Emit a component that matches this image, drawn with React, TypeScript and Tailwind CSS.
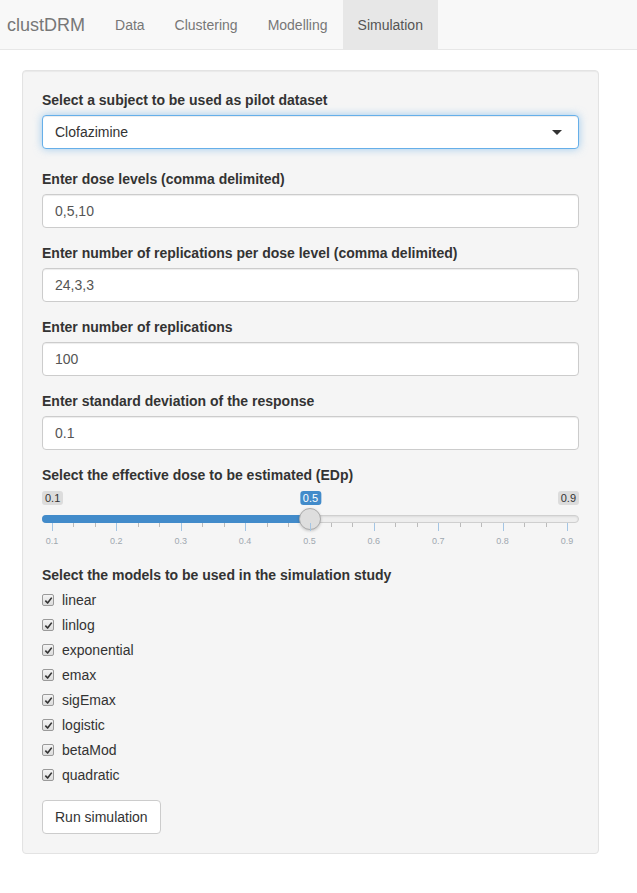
import React from 'react'

const tabs = ['Data', 'Clustering', 'Modelling', 'Simulation']
const models = ['linear', 'linlog', 'exponential', 'emax', 'sigEmax', 'logistic', 'betaMod', 'quadratic']
const textInputs = [
    {label: 'Enter dose levels (comma delimited)', value: '0,5,10'},
    {label: 'Enter number of replications per dose level (comma delimited)', value: '24,3,3'},
    {label: 'Enter number of replications', value: '100'},
    {label: 'Enter standard deviation of the response', value: '0.1'},
]

const Slider = ({min, max, value}: { min: number, max: number, value: number }) => {
    const pct = (value - min) / (max - min)
    const steps = 8
    const ticks: { p: number, major: boolean, text?: string }[] = []
    for (let i = 0; i <= steps; i++) {
        ticks.push({p: i / steps, major: true, text: (min + (i * (max - min)) / steps).toFixed(1)})
        if (i < steps) {
            ticks.push({p: (i + 1 / 3) / steps, major: false})
            ticks.push({p: (i + 2 / 3) / steps, major: false})
        }
    }
    return (
        <div className="mb-[15px]">
            <div className="relative h-[14px] mt-[6px] flex justify-between text-[11px] leading-[12px]">
                <span className="px-[3px] py-[1px] rounded-[3px] bg-[#dcdcdc] text-[#333]">{min.toFixed(1)}</span>
                <span className="absolute top-0 -translate-x-1/2 px-[3px] py-[1px] rounded-[3px] bg-[#428bca] text-white"
                      style={{left: `calc(${pct * 100}% + ${11 - pct * 22}px)`}}>{value.toFixed(1)}</span>
                <span className="px-[3px] py-[1px] rounded-[3px] bg-[#dcdcdc] text-[#333]">{max.toFixed(1)}</span>
            </div>
            <div className="relative mt-[10px] h-[8px] rounded-full border border-[#cfcfcf] bg-[#eeeeee] shadow-[inset_0_1px_2px_rgba(0,0,0,0.08)]">
                <div className="absolute left-[-1px] top-[-1px] h-[8px] rounded-full bg-[#428bca]"
                     style={{width: `calc(${pct * 100}% + ${12 - pct * 22}px)`}}/>
                <div className="absolute top-[-8px] w-[22px] h-[22px] rounded-full bg-[#dedede] border border-[#ababab] shadow-[0_1px_3px_rgba(0,0,0,0.2)]"
                     style={{left: `calc(${pct * 100}% - ${pct * 22 + 1}px)`}}/>
            </div>
            <div className="relative h-[27px] ml-[10px] mr-[12px]">
                {ticks.map((t, i) => (
                    <div key={i} className="absolute top-0" style={{left: `${t.p * 100}%`}}>
                        <div className={t.major ? 'w-px h-[8px] bg-[#a3c5e4]' : 'w-px h-[4px] bg-[#bbbbbb]'}/>
                        {t.text && (
                            <span className="absolute top-[12px] left-0 -translate-x-1/2 text-[9px] leading-[12px] text-[#a0a8b0]">
                                {t.text}
                            </span>
                        )}
                    </div>
                ))}
            </div>
        </div>
    )
}

const Check = () => (
    <span className="w-[12px] h-[12px] rounded-[2px] border border-[#9a9a9a] bg-gradient-to-b from-[#f4f4f4] to-[#dcdcdc] flex items-center justify-center">
        <svg viewBox="0 0 10 10" className="w-[9px] h-[9px]">
            <path d="M1.5 5.2 L4 7.8 L8.6 1.8" fill="none" stroke="#333" strokeWidth="1.8" strokeLinejoin="round"/>
        </svg>
    </span>
)

export default function App() {
    return (
        <div className="min-h-screen bg-white font-['Liberation_Sans',Arial,sans-serif] text-[14px] leading-[20px] text-[#333]">
            <nav className="h-[50px] flex bg-[#f8f8f8] border-b border-[#e7e7e7]">
                <div className="pl-[7px] pr-[15px] flex items-center text-[18px] text-[#777]">clustDRM</div>
                {tabs.map((t) => (
                    <div key={t}
                         className={t === 'Simulation'
                             ? 'px-[15px] flex items-center bg-[#e7e7e7] text-[#555]'
                             : 'px-[15px] flex items-center text-[#777]'}>
                        {t}
                    </div>
                ))}
            </nav>

            <div className="ml-[22px] mt-[20px] w-[577px] bg-[#f5f5f5] border border-[#e3e3e3] rounded-[4px] p-[19px] shadow-[inset_0_1px_1px_rgba(0,0,0,0.05)]">
                <div className="mb-[20px]">
                    <label className="block font-bold mb-[5px]">Select a subject to be used as pilot dataset</label>
                    <div className="relative h-[34px] flex items-center px-[12px] bg-white border border-[#66afe9] rounded-[4px] shadow-[inset_0_1px_1px_rgba(0,0,0,0.075),0_0_8px_rgba(102,175,233,0.6)]">
                        Clofazimine
                        <span className="absolute right-[16px] top-[14px] w-0 h-0 border-l-[5px] border-r-[5px] border-t-[5px] border-l-transparent border-r-transparent border-t-[#333]"/>
                    </div>
                </div>

                {textInputs.map((f) => (
                    <div key={f.label} className="mb-[15px]">
                        <label className="block font-bold mb-[5px]">{f.label}</label>
                        <input defaultValue={f.value}
                               className="w-full h-[34px] px-[12px] bg-white border border-[#ccc] rounded-[4px] text-[#555] outline-none shadow-[inset_0_1px_1px_rgba(0,0,0,0.075)]"/>
                    </div>
                ))}

                <label className="block font-bold">Select the effective dose to be estimated (EDp)</label>
                <Slider min={0.1} max={0.9} value={0.5}/>

                <label className="block font-bold mb-[5px]">Select the models to be used in the simulation study</label>
                <div className="flex flex-col gap-[5px]">
                    {models.map((m) => (
                        <div key={m} className="h-[20px] flex items-center">
                            <Check/>
                            <span className="ml-[8px]">{m}</span>
                        </div>
                    ))}
                </div>

                <button className="mt-[15px] h-[34px] px-[12px] bg-white border border-[#ccc] rounded-[4px] text-[#333]">
                    Run simulation
                </button>
            </div>
        </div>
    )
}
